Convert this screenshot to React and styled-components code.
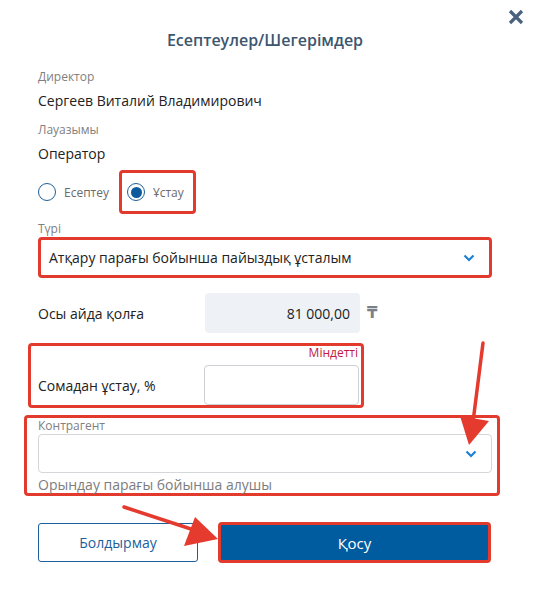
import React from 'react'
import styled, { createGlobalStyle } from 'styled-components'

const GlobalStyle = createGlobalStyle`
  html, body {
    margin: 0;
    padding: 0;
    background: #fff;
  }
  * {
    box-sizing: border-box;
  }
`

const ChevronDown = () => (
  <svg width="12" height="8" viewBox="0 0 12 8">
    <path d="M1.5 1.5 L6 6 L10.5 1.5" fill="none" stroke="#1b80d6" strokeWidth="2.2" />
  </svg>
)

const App = () => {
  return (
    <>
      <GlobalStyle />
      <Dialog>
        <CloseButton aria-label="close">
          <svg width="16" height="16" viewBox="0 0 16 16">
            <path d="M2 2 L14 14 M14 2 L2 14" stroke="#4a627d" strokeWidth="3.2" strokeLinecap="butt" />
          </svg>
        </CloseButton>
        <Title>Есептеулер/Шегерімдер</Title>

        <Field>
          <Label>Директор</Label>
          <Value>Сергеев Виталий Владимирович</Value>
        </Field>
        <Field $top={11}>
          <Label>Лауазымы</Label>
          <Value>Оператор</Value>
        </Field>

        <RadioRow>
          <RadioItem>
            <RadioCircle />
            <RadioText>Есептеу</RadioText>
          </RadioItem>
          <RadioItem $marked>
            <RadioCircle $checked />
            <RadioText>Ұстау</RadioText>
          </RadioItem>
        </RadioRow>

        <SmallLabel>Түрі</SmallLabel>
        <Select $marked>
          <span>Атқару парағы бойынша пайыздық ұсталым</span>
          <ChevronDown />
        </Select>

        <AmountRow>
          <RowLabel>Осы айда қолға</RowLabel>
          <AmountBox>81 000,00</AmountBox>
          <Tenge>₸</Tenge>
        </AmountRow>

        <RequiredBlock>
          <Required>Міндетті</Required>
          <InputRow>
            <RowLabel>Сомадан ұстау, %</RowLabel>
            <TextInput />
          </InputRow>
        </RequiredBlock>

        <CounterpartBlock>
          <SmallLabel $top={0}>Контрагент</SmallLabel>
          <Select $height={39}>
            <span />
            <ChevronDown />
          </Select>
          <Hint>Орындау парағы бойынша алушы</Hint>
        </CounterpartBlock>

        <Buttons>
          <CancelButton>Болдырмау</CancelButton>
          <SubmitButton>Қосу</SubmitButton>
        </Buttons>

        <Arrows width="534" height="593" viewBox="0 0 534 593">
          <line x1="483" y1="343" x2="473" y2="422" stroke="#e53b2f" strokeWidth="3.5" strokeLinecap="round" />
          <polygon points="460,416 489,421 469,445" fill="#e53b2f" />
          <line x1="124" y1="507" x2="194" y2="530" stroke="#e53b2f" strokeWidth="3.5" strokeLinecap="round" />
          <polygon points="195,517 184,546 218,539" fill="#e53b2f" />
        </Arrows>
      </Dialog>
    </>
  )
}

const Dialog = styled.div`
  position: relative;
  width: 534px;
  height: 593px;
  padding: 30px 42px 0 38px;
  font-family: 'Open Sans', 'Noto Sans', 'DejaVu Sans', sans-serif;
  color: #222;
  background: #fff;
  overflow: hidden;
`

const CloseButton = styled.button`
  position: absolute;
  top: 9px;
  right: 10px;
  width: 16px;
  height: 16px;
  padding: 0;
  border: none;
  background: none;
  display: flex;
`

const Title = styled.h2`
  margin: 0 0 19px;
  text-align: center;
  font-size: 16px;
  line-height: 20px;
  font-weight: 600;
  color: #3d566f;
`

const Field = styled.div`
  display: flex;
  flex-direction: column;
  gap: 6px;
  margin-top: ${p => p.$top || 0}px;
`

const Label = styled.div`
  font-size: 12px;
  line-height: 16px;
  color: #808080;
`

const Value = styled.div`
  font-size: 14px;
  line-height: 20px;
  color: #222;
`

const RadioRow = styled.div`
  display: flex;
  align-items: center;
  gap: 10px;
  margin-top: 6px;
  height: 44px;
`

const RadioItem = styled.label`
  display: flex;
  align-items: center;
  gap: 8px;
  height: 44px;
  padding: ${p => (p.$marked ? '0 9px 0 5px' : '0')};
  border: ${p => (p.$marked ? '3px solid #e23b2e' : 'none')};
  border-radius: 4px;
`

const RadioCircle = styled.span`
  position: relative;
  width: 18px;
  height: 18px;
  border-radius: 50%;
  border: 1.5px solid #1d5f9b;
  &::after {
    content: '';
    display: ${p => (p.$checked ? 'block' : 'none')};
    position: absolute;
    inset: 2.5px;
    border-radius: 50%;
    background: #0d5a9c;
  }
`

const RadioText = styled.span`
  font-size: 12px;
  color: #6b6b6b;
`

const SmallLabel = styled.div`
  margin-top: ${p => (p.$top === undefined ? 7 : p.$top)}px;
  font-size: 12px;
  line-height: 16px;
  color: #808080;
`

const Select = styled.div`
  display: flex;
  align-items: center;
  justify-content: space-between;
  height: ${p => p.$height || 41}px;
  padding: 0 14px 0 ${p => (p.$marked ? 8 : 10)}px;
  border: ${p => (p.$marked ? '3px solid #e23b2e' : '1px solid #d4d6da')};
  border-radius: 4px;
  font-size: 14px;
  color: #222;
  background: #fff;
`

const AmountRow = styled.div`
  display: flex;
  align-items: center;
  margin-top: 15px;
  height: 40px;
`

const RowLabel = styled.div`
  width: 167px;
  font-size: 14px;
  color: #222;
`

const AmountBox = styled.div`
  width: 155px;
  height: 40px;
  display: flex;
  align-items: center;
  justify-content: flex-end;
  padding-right: 10px;
  border-radius: 4px;
  background: #eef1f5;
  font-size: 14px;
  color: #222;
`

const Tenge = styled.span`
  margin-left: 7px;
  font-family: 'DejaVu Sans', sans-serif;
  font-size: 15px;
  font-weight: bold;
  color: #7b8088;
`

const RequiredBlock = styled.div`
  width: 336px;
  margin: 10px 0 0 -10px;
  padding: 0 2px 0 7px;
  border: 3px solid #e23b2e;
  border-radius: 4px;
  height: 65px;
`

const Required = styled.div`
  text-align: right;
  font-size: 12px;
  line-height: 14px;
  padding-right: 1px;
  color: #c2183f;
`

const InputRow = styled.div`
  display: flex;
  align-items: center;
  margin-top: 5px;
`

const TextInput = styled.div`
  width: 155px;
  height: 40px;
  border: 1px solid #cdd0d4;
  border-radius: 4px;
  background: #fff;
`

const CounterpartBlock = styled.div`
  width: 476px;
  margin: 7px 0 0 -14px;
  padding: 0 5px 0 11px;
  border: 3px solid #e23b2e;
  border-radius: 4px;
  height: 81px;
`

const Hint = styled.div`
  margin-top: 2px;
  font-size: 14px;
  line-height: 20px;
  color: #7d7d7d;
`

const Buttons = styled.div`
  display: flex;
  align-items: center;
  gap: 20px;
  margin-top: 26px;
`

const CancelButton = styled.button`
  width: 160px;
  height: 39px;
  border: 1px solid #1d5f9b;
  border-radius: 3px;
  background: #fff;
  color: #1d5f9b;
  font-family: inherit;
  font-size: 14px;
`

const SubmitButton = styled.button`
  width: 273px;
  height: 41px;
  border: 3px solid #e23b2e;
  border-radius: 4px;
  background: #005b9f;
  color: #fff;
  font-family: inherit;
  font-size: 15px;
`

const Arrows = styled.svg`
  position: absolute;
  left: 0;
  top: 0;
  pointer-events: none;
`

export default App
